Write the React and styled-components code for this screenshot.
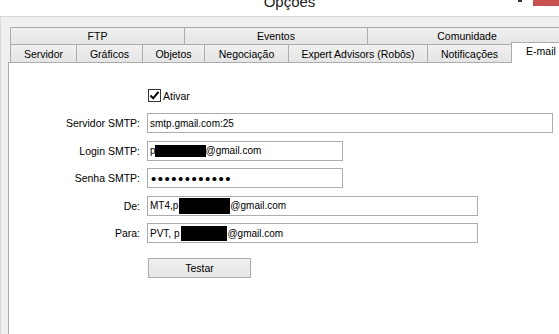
import React from "react";
import styled, { createGlobalStyle } from "styled-components";

const GlobalStyle = createGlobalStyle`
  html, body { margin: 0; padding: 0; }
  body {
    background: #f0f0f0;
    font-family: "Liberation Sans", Arial, sans-serif;
    overflow: hidden;
  }
  * { box-sizing: border-box; }
`;

const topTabs = [
    { name: "FTP", w: 175 },
    { name: "Eventos", w: 184 },
    { name: "Comunidade", w: 200 },
];

const bottomTabs = [
    { name: "Servidor", w: 67 },
    { name: "Gráficos", w: 67 },
    { name: "Objetos", w: 63 },
    { name: "Negociação", w: 85 },
    { name: "Expert Advisors (Robôs)", w: 140 },
    { name: "Notificações", w: 85 },
    { name: "E-mail", w: 60, active: true },
];

const Window = styled.div`
  width: 100vw;
  height: 100vh;
  display: flex;
  flex-direction: column;
  overflow: hidden;
  background: #f0f0f0;
  color: #000;
`;

const TitleBar = styled.div`
  display: grid;
  grid-template-columns: 1fr auto 1fr;
  height: 17px;
  padding-left: 20px;
  background: #fff;
  border-bottom: 1px solid #d9d9d9;
  overflow: hidden;
`;

const Title = styled.div`
  grid-column: 2;
  margin-top: -6px;
  font-size: 15px;
  line-height: 15px;
  color: #222;
`;

const Controls = styled.div`
  grid-column: 3;
  justify-self: end;
  display: flex;
  align-items: flex-start;
`;

const MinGlyph = styled.span`
  width: 4px;
  height: 2px;
  margin-right: 11px;
  background: #333;
`;

const CloseButton = styled.span`
  width: 26px;
  height: 6px;
  background: #c75050;
`;

const Body = styled.div`
  flex: 1;
  min-height: 0;
  display: flex;
  flex-direction: column;
  padding: 10px 0 0 7px;
  border-left: 1px solid #d9d9d9;
`;

const TabStrip = styled.div`
  display: flex;
  flex-direction: column;
  margin-left: 2px;
`;

const TabRow = styled.div`
  display: flex;
  align-items: flex-end;
  height: ${(p) => p.$h}px;
`;

const Tab = styled.div`
  flex: none;
  display: flex;
  align-items: center;
  justify-content: center;
  width: ${(p) => p.$w}px;
  height: ${(p) => p.$h}px;
  margin-left: -1px;
  &:first-child { margin-left: 0; }
  border: 1px solid #acacac;
  border-bottom: none;
  background: linear-gradient(#f0f0f0, #e5e5e5);
  font-size: 10.5px;
  white-space: nowrap;
  ${(p) =>
        p.$active &&
        `
    position: relative;
    z-index: 1;
    height: 21px;
    margin-bottom: -1px;
    align-items: flex-start;
    padding-top: 2px;
    background: #fff;
  `}
`;

const Panel = styled.div`
  flex: 1;
  margin-right: -10px;
  margin-bottom: -10px;
  padding-top: 26px;
  background: #fff;
  border: 1px solid #acacac;
`;

const Form = styled.div`
  display: flex;
  flex-direction: column;
  gap: 7.5px;
`;

const FieldRow = styled.div`
  display: grid;
  grid-template-columns: 131px auto;
  column-gap: 7px;
  align-items: center;
  justify-content: start;
  margin-top: ${(p) => p.$mt || 0}px;
  margin-bottom: ${(p) => p.$mb || 0}px;
`;

const Label = styled.div`
  grid-column: 1;
  text-align: right;
  font-size: 10.5px;
  white-space: nowrap;
`;

const Field = styled.div`
  grid-column: 2;
  display: flex;
  align-items: center;
  width: ${(p) => p.$w}px;
  height: 20px;
  padding: 0 2px;
  background: #fff;
  border: 1px solid #abadb3;
  font-size: 10px;
  white-space: nowrap;
  overflow: hidden;
`;

const Redact = styled.span`
  display: inline-block;
  flex: none;
  width: ${(p) => p.$w}px;
  height: ${(p) => p.$h}px;
  margin-left: ${(p) => p.$ml || 0}px;
  background: #000;
`;

const Dots = styled.span`
  margin-left: 1px;
  font-size: 15px;
  line-height: 1;
  letter-spacing: 1.5px;
`;

const CheckLabel = styled.label`
  grid-column: 2;
  display: flex;
  align-items: center;
  gap: 2px;
  margin-left: 1px;
  font-size: 10.5px;
`;

const CheckBox = styled.span`
  display: flex;
  align-items: center;
  justify-content: center;
  width: 13px;
  height: 13px;
  background: #fff;
  border: 1px solid #333;
`;

const Button = styled.button`
  grid-column: 2;
  width: 103px;
  height: 20px;
  margin-left: 1px;
  padding: 0;
  border: 1px solid #acacac;
  background: linear-gradient(#f0f0f0, #e5e5e5);
  font-family: inherit;
  font-size: 10.5px;
  color: #000;
`;

function App() {
    return (
        <Window>
            <GlobalStyle />
            <TitleBar>
                <Title>Opções</Title>
                <Controls>
                    <MinGlyph />
                    <CloseButton />
                </Controls>
            </TitleBar>
            <Body>
                <TabStrip>
                    <TabRow $h={17}>
                        {topTabs.map((t) => (
                            <Tab key={t.name} $w={t.w} $h={17}>
                                {t.name}
                            </Tab>
                        ))}
                    </TabRow>
                    <TabRow $h={18}>
                        {bottomTabs.map((t) => (
                            <Tab key={t.name} $w={t.w} $h={18} $active={t.active}>
                                {t.name}
                            </Tab>
                        ))}
                    </TabRow>
                </TabStrip>
                <Panel>
                    <Form>
                        <FieldRow $mb={3.5}>
                            <CheckLabel>
                                <CheckBox>
                                    <svg width="11" height="11" viewBox="0 0 11 11">
                                        <path d="M1.5 5.5 L4.2 8.3 L9.5 1.8" fill="none" stroke="#000" strokeWidth="2" />
                                    </svg>
                                </CheckBox>
                                Ativar
                            </CheckLabel>
                        </FieldRow>
                        <FieldRow>
                            <Label>Servidor SMTP:</Label>
                            <Field $w={406}>smtp.gmail.com:25</Field>
                        </FieldRow>
                        <FieldRow>
                            <Label>Login SMTP:</Label>
                            <Field $w={196}>
                                p<Redact $w={51} $h={12} $ml={-1} />@gmail.com
                            </Field>
                        </FieldRow>
                        <FieldRow>
                            <Label>Senha SMTP:</Label>
                            <Field $w={196}>
                                <Dots>••••••••••••</Dots>
                            </Field>
                        </FieldRow>
                        <FieldRow>
                            <Label>De:</Label>
                            <Field $w={331}>
                                MT4,p<Redact $w={51} $h={16} $ml={1} />@gmail.com
                            </Field>
                        </FieldRow>
                        <FieldRow>
                            <Label>Para:</Label>
                            <Field $w={331}>
                                PVT, p<Redact $w={46} $h={15} $ml={2} />@gmail.com
                            </Field>
                        </FieldRow>
                        <FieldRow $mt={7.5}>
                            <Button>Testar</Button>
                        </FieldRow>
                    </Form>
                </Panel>
            </Body>
        </Window>
    );
}

export default App;
